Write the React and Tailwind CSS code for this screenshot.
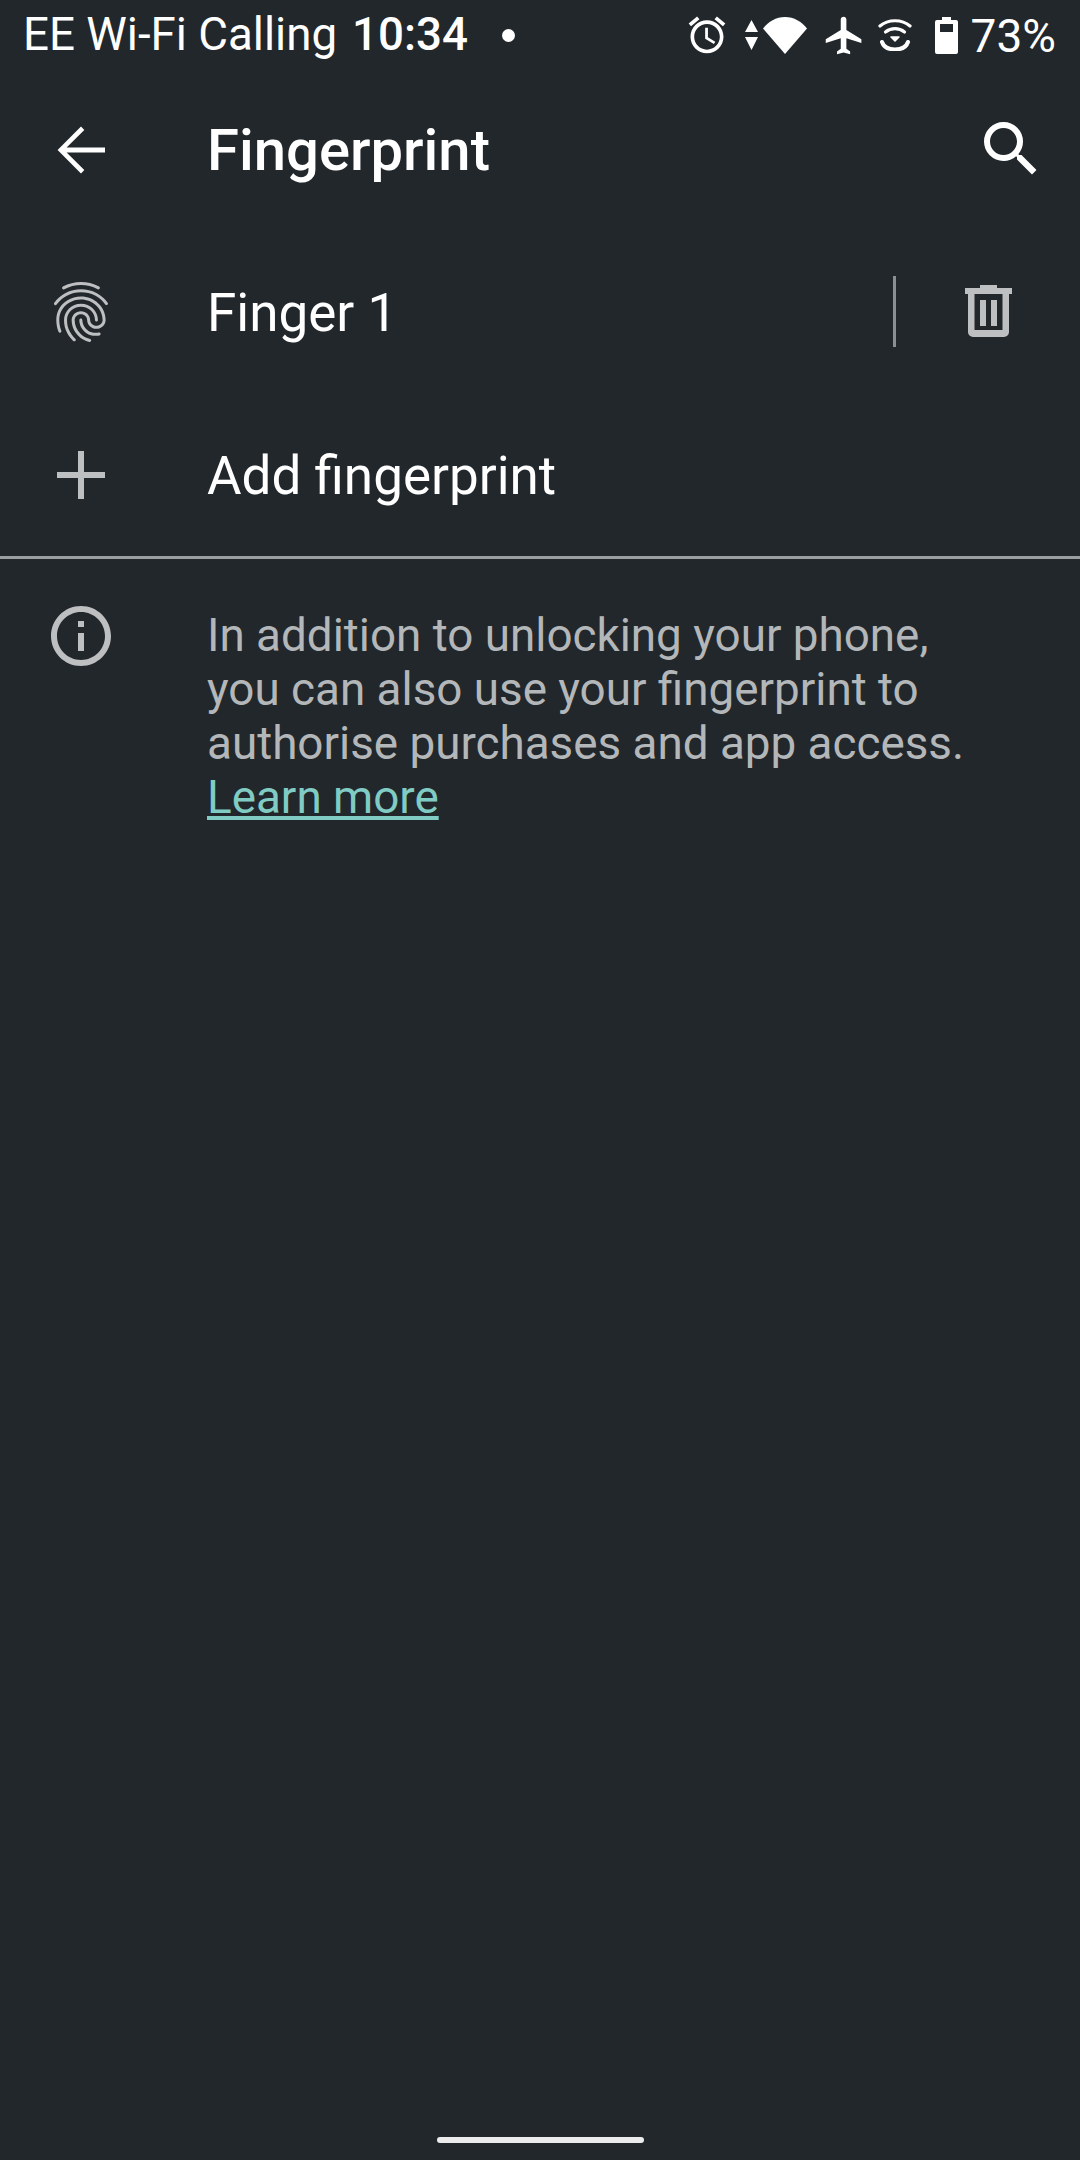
import React from 'react';

const font = { fontFamily: 'Roboto, sans-serif' };

function Icon({ d, size = 72, className = '' }) {
    return (
        <svg width={size} height={size} viewBox="0 0 24 24" fill="currentColor" className={`shrink-0 ${className}`}>
            <path d={d} />
        </svg>
    );
}

const paths = {
    back: 'M20 11.2H7.2l5.9-5.9L12 4.2 4.2 12l7.8 7.8 1.1-1.1-5.9-5.9H20v-1.6z',
    search: 'M15.5 14h-.79l-.28-.27A6.471 6.471 0 0 0 16 9.5 6.5 6.5 0 1 0 9.5 16c1.61 0 3.09-.59 4.23-1.57l.27.28v.79l5 4.99L20.49 19l-4.99-5zm-6 0C7.01 14 5 11.99 5 9.5S7.01 5 9.5 5 14 7.01 14 9.5 11.99 14 9.5 14z',
    fingerprint: 'M17.81 4.47c-.08 0-.16-.02-.23-.06C15.66 3.42 14 3 12.01 3c-1.98 0-3.86.47-5.57 1.41-.24.13-.54.04-.68-.2-.13-.24-.04-.55.2-.68C7.82 2.52 9.86 2 12.01 2c2.13 0 3.99.47 6.03 1.52.25.13.34.43.21.67-.09.18-.26.28-.44.28zM3.5 9.72c-.1 0-.2-.03-.29-.09-.23-.16-.28-.47-.12-.7.99-1.4 2.25-2.5 3.75-3.27C9.98 4.04 14 4.03 17.15 5.65c1.5.77 2.76 1.86 3.75 3.25.16.22.11.54-.12.7-.23.16-.54.11-.7-.12-.9-1.26-2.04-2.25-3.39-2.94-2.87-1.47-6.54-1.47-9.4.01-1.36.7-2.5 1.7-3.4 2.96-.08.14-.23.21-.39.21zm6.25 12.07c-.13 0-.26-.05-.35-.15-.87-.87-1.34-1.43-2.01-2.64-.69-1.23-1.05-2.73-1.05-4.34 0-2.97 2.54-5.39 5.66-5.39s5.66 2.42 5.66 5.39c0 .28-.22.5-.5.5s-.5-.22-.5-.5c0-2.42-2.09-4.39-4.66-4.39-2.57 0-4.66 1.97-4.66 4.39 0 1.44.32 2.77.93 3.85.64 1.15 1.08 1.64 1.85 2.42.19.2.19.51 0 .71-.11.1-.24.15-.37.15zm7.17-1.85c-1.19 0-2.24-.3-3.1-.89-1.49-1.01-2.38-2.65-2.38-4.39 0-.28.22-.5.5-.5s.5.22.5.5c0 1.41.72 2.74 1.94 3.56.71.48 1.54.71 2.54.71.24 0 .64-.03 1.04-.1.27-.05.53.13.58.41.05.27-.13.53-.41.58-.57.11-1.07.12-1.21.12zM14.91 22c-.04 0-.09-.01-.13-.02-1.59-.44-2.63-1.03-3.72-2.1-1.4-1.39-2.17-3.24-2.17-5.22 0-1.62 1.38-2.94 3.08-2.94 1.7 0 3.08 1.32 3.08 2.94 0 1.07.93 1.94 2.08 1.94s2.08-.87 2.08-1.94c0-3.77-3.25-6.83-7.25-6.83-2.84 0-5.44 1.58-6.61 4.03-.39.81-.59 1.76-.59 2.8 0 .78.07 2.01.67 3.61.1.26-.03.55-.29.64-.26.1-.55-.04-.64-.29-.49-1.31-.73-2.61-.73-3.96 0-1.2.23-2.29.68-3.24 1.33-2.79 4.28-4.6 7.51-4.6 4.55 0 8.25 3.51 8.25 7.83 0 1.62-1.38 2.94-3.08 2.94s-3.08-1.32-3.08-2.94c0-1.07-.93-1.94-2.08-1.94s-2.08.87-2.08 1.94c0 1.71.66 3.31 1.87 4.51.95.94 1.86 1.46 3.27 1.85.27.07.42.35.35.61-.05.23-.26.38-.47.38z',
    info: 'M11 7h2v2h-2zm0 4h2v6h-2zm1-9C6.48 2 2 6.48 2 12s4.48 10 10 10 10-4.48 10-10S17.52 2 12 2zm0 18c-4.41 0-8-3.59-8-8s3.59-8 8-8 8 3.59 8 8-3.59 8-8 8z',
    alarm: 'M22 5.72l-4.6-3.86-1.29 1.53 4.6 3.86L22 5.72zM7.88 3.39L6.6 1.86 2 5.71l1.29 1.53 4.59-3.85zM12.5 8H11v6l4.75 2.85.75-1.23-4-2.37V8zM12 4c-4.97 0-9 4.03-9 9s4.03 9 9 9 9-4.03 9-9-4.03-9-9-9zm0 16c-3.87 0-7-3.13-7-7s3.13-7 7-7 7 3.13 7 7-3.13 7-7 7z',
    flight: 'M21 16v-2l-8-5V3.5c0-.83-.67-1.5-1.5-1.5S10 2.67 10 3.5V9l-8 5v2l8-2.5V19l-2 1.5V22l3.5-1 3.5 1v-1.5L13 19v-5.5l8 2.5z',
};

function StatusIcons() {
    return (
        <div className="flex items-center text-white">
            <Icon d={paths.alarm} size={44} />
            {/* data arrows */}
            <svg width="13" height="30" viewBox="0 0 13 30" fill="currentColor" className="ml-[16px] shrink-0">
                <path d="M6.5 0L13 12H0z M0 17h13L6.5 30z" />
            </svg>
            {/* wifi */}
            <svg width="44" height="37" viewBox="0 0 44 37" fill="currentColor" className="ml-[5px] shrink-0">
                <path d="M0 11.5C5.5 4.5 13 0 22 0s16.500 4.500 22 11.500L22 37z" />
            </svg>
            <Icon d={paths.flight} size={45} className="ml-[15px]" />
            {/* wifi calling */}
            <svg width="34" height="32" viewBox="0 0 34 32" fill="none" stroke="currentColor" strokeWidth="3.2" strokeLinecap="round" className="ml-[11px] shrink-0">
                <path d="M2 7C10 0 24 0 32 7" />
                <path d="M7.500 13C13 8.500 21 8.500 26.500 13" />
                <path d="M13 18h8l-4 4z" fill="currentColor" strokeWidth="1.500" strokeLinejoin="round" />
                <path d="M4 23c2 6 8 7.500 13 7.500S28 29 30 23" strokeWidth="4" />
            </svg>
            {/* battery */}
            <svg width="23" height="37" viewBox="0 0 23 37" fill="currentColor" fillRule="evenodd" className="ml-[23px] shrink-0">
                <path d="M7 0h9v3h5a2 2 0 0 1 2 2v30a2 2 0 0 1-2 2H2a2 2 0 0 1-2-2V5a2 2 0 0 1 2-2h5z M5 7v8h13V7z" />
            </svg>
            <span className="ml-[13px] mt-[1px] text-[46px] leading-none">73%</span>
        </div>
    );
}

export default function App() {
    return (
        <div style={font} className="w-[1080px] h-[2160px] bg-[#22272b] flex flex-col overflow-hidden">
            <div className="h-[70px] flex items-center justify-between pl-[23px] pr-[24px] text-white text-[45.700px]">
                <div className="flex items-center mt-[1px]">
                    <span>EE Wi-Fi Calling</span>
                    <span className="ml-[15px] font-medium">10:34</span>
                    <span className="ml-[34px] w-[13px] h-[13px] rounded-full bg-white"></span>
                </div>
                <StatusIcons />
            </div>

            <div className="h-[160px] flex items-center pl-[45px] pr-[33px] text-white">
                <Icon d={paths.back} />
                <h1 className="ml-[90px] mt-[1px] flex-1 text-[58px] font-medium">Fingerprint</h1>
                <Icon d={paths.search} className="mb-[3px]" />
            </div>

            <div className="h-[163px] mt-[1px] flex items-center pl-[45px] text-[#bdbfc1]">
                <Icon d={paths.fingerprint} className="mb-[1px]" />
                <span className="ml-[90px] mt-[2px] flex-1 text-[53px] text-white">Finger 1</span>
                <div className="w-[3px] h-[71px] bg-[#8b8f91] mb-[2px]"></div>
                <svg width="47" height="52" viewBox="0 0 47 52" fill="currentColor" fillRule="evenodd" className="ml-[69px] mr-[68px] mb-[3px] shrink-0">
                    <path d="M15 0h17v3h15v6h-3v38a5 5 0 0 1-5 5H8a5 5 0 0 1-5-5V9H0V3h15z M9.500 9v36h28V9z M15 15h6v26h-6z M26 15h6v26h-6z" />
                </svg>
            </div>

            <div className="h-[162px] flex items-center pl-[45px] text-[#bdbfc1]">
                <svg width="72" height="72" viewBox="0 0 72 72" fill="currentColor" className="shrink-0">
                    <path d="M33 12h6v21h21v6H39v21h-6V39H12v-6h21z" />
                </svg>
                <span className="ml-[90px] mt-[3px] text-[53px] text-white">Add fingerprint</span>
            </div>

            <div className="h-[3px] bg-[#9a9ea0]"></div>

            <div className="flex pl-[45px] pt-[50px] pr-[60px] text-[#b4b7b9]">
                <Icon d={paths.info} className="-mt-[9px] text-[#bdbfc1]" />
                <p className="ml-[90px] text-[45.800px] leading-[54px]">
                    In addition to unlocking your phone,<br />
                    you can also use your fingerprint to<br />
                    authorise purchases and app access.<br />
                    <a className="text-[#80cbc4] underline">Learn more</a>
                </p>
            </div>

            <div className="mt-auto mb-[17px] mx-auto w-[207px] h-[6px] rounded-full bg-[#ececec]"></div>
        </div>
    );
}
